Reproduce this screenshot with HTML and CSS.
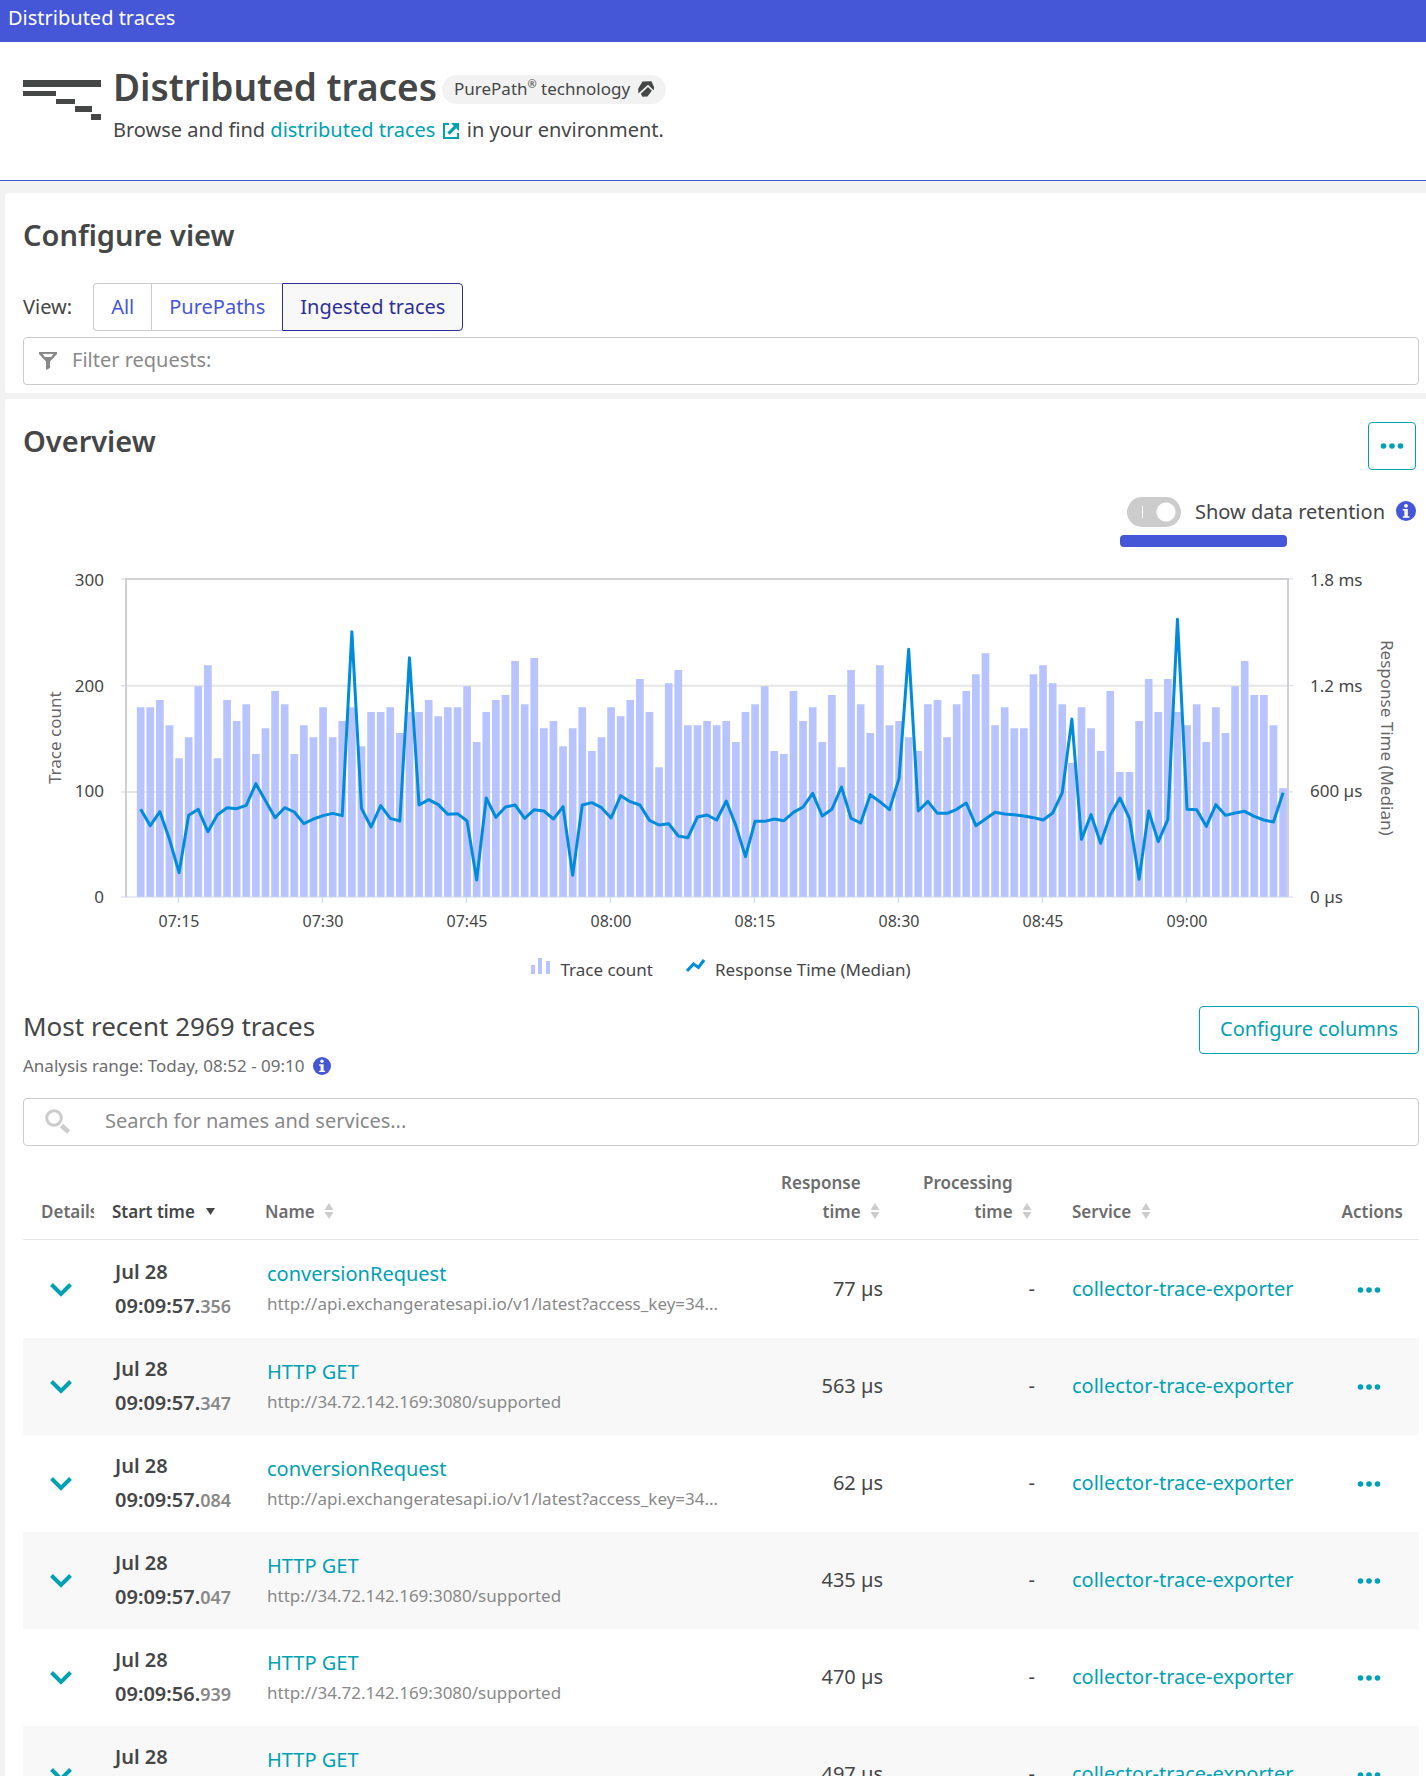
FILE: index.html
```html
<!DOCTYPE html>
<html lang="en">
<head>
<meta charset="utf-8">
<meta name="viewport" content="width=device-width, initial-scale=1">
<title>Distributed traces</title>
<link rel="stylesheet" href="styles.css">
</head>
<body>
<svg class="sprite" aria-hidden="true">
  <symbol id="chevron" viewBox="0 0 24 16"><path d="M2.500 2.500 L12 12 L21.500 2.500" fill="none" stroke="currentColor" stroke-width="4"/></symbol>
  <symbol id="dots" viewBox="0 0 24 8"><circle cx="3.500" cy="4" r="2.800"/><circle cx="12" cy="4" r="2.800"/><circle cx="20.500" cy="4" r="2.800"/></symbol>
  <symbol id="sort" viewBox="0 0 10 16"><path d="M5 0 L9.500 7 H0.500 Z M5 16 L9.500 9 H0.500 Z"/></symbol>
  <symbol id="info" viewBox="0 0 20 20"><circle cx="10" cy="10" r="10" fill="#4556d7"/><circle cx="10" cy="4.800" r="1.900" fill="#fff"/><path d="M6.800 8 H11.800 V15.200 H13.400 V16.800 H6.800 V15.200 H8.400 V9.600 H6.800 Z" fill="#fff"/></symbol>
</svg>

<nav class="topbar" aria-label="Breadcrumb">Distributed traces</nav>

<header class="page-header">
  <svg class="page-icon" viewBox="0 0 78 40" aria-hidden="true"><path fill="#454646" d="M0 0H78V7H0Z M0 11H33V16H0Z M33 19H52V24H33Z M52 26H69V32H52Z M68 34H78V40H68Z"/></svg>
  <div>
    <div class="title-row">
      <h1>Distributed traces</h1>
      <span class="pill"><span>PurePath<sup>®</sup> technology</span>
        <svg width="16" height="16" viewBox="0 0 16 16" aria-hidden="true"><path fill="#454646" d="M4.500 0.500 L13.500 0.300 L16 6 L15.800 9.500 L10 3.800 L0.300 12.500 L0.300 7.500 Z M10 6 L13.800 9.700 L9.500 15.500 L4.500 15.800 L2.800 12.800 Z"/></svg>
      </span>
    </div>
    <p class="subtitle">Browse and find <a href="#">distributed traces <svg width="16" height="16" viewBox="0 0 16 16" aria-hidden="true"><path fill="#00a1b2" d="M0 0H6V2H2V14H14V10H16V16H0Z M8 0H16V8L13.200 5.200L6.500 11.800L4.300 9.600L10.900 2.900Z"/></svg></a> in your environment.</p>
  </div>
</header>

<main>
  <section class="card configure">
    <h2>Configure view</h2>
    <div class="view-row">
      <span>View:</span>
      <div class="segmented" role="group" aria-label="View">
        <button type="button">All</button><button type="button">PurePaths</button><button type="button" class="active" aria-pressed="true">Ingested traces</button>
      </div>
    </div>
    <div class="field filter">
      <svg width="18" height="18" viewBox="0 0 18 18" aria-hidden="true"><path fill="#898989" fill-rule="evenodd" d="M0 0H18V2L11 9.500V16L7 18V9.500L0 2Z M3.500 2L6 5H12L14.500 2Z"/></svg>
      <input type="text" placeholder="Filter requests:" aria-label="Filter requests">
    </div>
  </section>

  <section class="card overview">
    <div class="overview-head">
      <h2>Overview</h2>
      <button type="button" class="icon-button" aria-label="More"><svg width="24" height="8"><use href="#dots"/></svg></button>
    </div>

    <div class="retention">
      <input type="checkbox" class="toggle" id="retention" role="switch">
      <label for="retention">Show data retention</label>
      <svg class="info" width="20" height="20"><use href="#info"/></svg>
    </div>
    <div class="retention-bar"></div>

    <div class="chart">
      <div class="axis-title left">Trace count</div>
      <div class="axis left"><span>300</span><span>200</span><span>100</span><span>0</span></div>
      <svg class="plot" viewBox="0 57 3486 954" preserveAspectRatio="none" role="img" aria-label="Trace count and median response time">
        <path class="grid" d="M0 377H3486M0 696H3486"/>
        <path class="bars" id="bars"/>
        <path class="frame" d="M0 1011V57H3486V1011"/>
        <path class="ticks" d="M-15 57H0M-15 377H0M-15 696H0M3486 57H3501M3486 377H3501M3486 696H3501M-15 1011H3501M157 1011V1028M589 1011V1028M1021 1011V1028M1453 1011V1028M1885 1011V1028M2317 1011V1028M2749 1011V1028M3181 1011V1028"/>
        <path class="line" id="line"/>
      </svg>
      <div class="axis right"><span>1.8 ms</span><span>1.2 ms</span><span>600 µs</span><span>0 µs</span></div>
      <div class="axis-title right">Response Time (Median)</div>
      <div class="time-axis"><span>07:15</span><span>07:30</span><span>07:45</span><span>08:00</span><span>08:15</span><span>08:30</span><span>08:45</span><span>09:00</span></div>
    </div>

    <div class="legend">
      <span><svg width="19" height="16" viewBox="0 0 19 16" aria-hidden="true"><path fill="#b8c4ff" d="M0 7H4V16H0Z M7 0H11V16H7Z M15 3H19V16H15Z"/></svg>Trace count</span>
      <span><svg width="19" height="16" viewBox="0 0 19 16" aria-hidden="true"><path fill="none" stroke="#008cdb" stroke-width="3" d="M1 13L7.500 6L12.500 9.500L18 2"/></svg>Response Time (Median)</span>
    </div>

    <div class="traces-head">
      <div>
        <h3>Most recent 2969 traces</h3>
        <p class="range">Analysis range: Today, 08:52 - 09:10 <svg class="info" width="18" height="18"><use href="#info"/></svg></p>
      </div>
      <button type="button" class="outline-button">Configure columns</button>
    </div>

    <div class="field search">
      <svg width="26" height="26" viewBox="0 0 26 26" aria-hidden="true"><g fill="none" stroke="#ccc"><circle cx="9" cy="9" r="7.300" stroke-width="3"/><path d="M16.500 16.500L23.500 23" stroke-width="4.500"/></g></svg>
      <input type="search" placeholder="Search for names and services..." aria-label="Search for names and services">
    </div>

    <table class="traces">
      <colgroup><col class="c-details"><col class="c-start"><col><col class="c-response"><col class="c-processing"><col class="c-service"><col class="c-actions"></colgroup>
      <thead>
        <tr>
          <th><div class="clip">Details</div></th>
          <th class="sorted">Start time <svg class="caret" width="9" height="7" viewBox="0 0 9 7"><path d="M0 0H9L4.500 7Z"/></svg></th>
          <th>Name <svg class="sort" width="10" height="16"><use href="#sort"/></svg></th>
          <th class="num"><span class="wrap-head">Response time</span> <svg class="sort" width="10" height="16"><use href="#sort"/></svg></th>
          <th class="num"><span class="wrap-head">Processing time</span> <svg class="sort" width="10" height="16"><use href="#sort"/></svg></th>
          <th class="service">Service <svg class="sort" width="10" height="16"><use href="#sort"/></svg></th>
          <th class="actions">Actions</th>
        </tr>
      </thead>
      <tbody>
        <tr>
          <td><button type="button" class="bare" aria-label="Details"><svg width="24" height="16"><use href="#chevron"/></svg></button></td>
          <td class="start">Jul 28<br>09:09:57.<small>356</small></td>
          <td class="name"><a href="#">conversionRequest</a><div>http://api.exchangeratesapi.io/v1/latest?access_key=34...</div></td>
          <td class="num">77 µs</td><td class="num">-</td>
          <td class="service"><a href="#">collector-trace-exporter</a></td>
          <td class="actions"><button type="button" class="bare" aria-label="Actions"><svg width="24" height="8"><use href="#dots"/></svg></button></td>
        </tr>
        <tr>
          <td><button type="button" class="bare" aria-label="Details"><svg width="24" height="16"><use href="#chevron"/></svg></button></td>
          <td class="start">Jul 28<br>09:09:57.<small>347</small></td>
          <td class="name"><a href="#">HTTP GET</a><div>http://34.72.142.169:3080/supported</div></td>
          <td class="num">563 µs</td><td class="num">-</td>
          <td class="service"><a href="#">collector-trace-exporter</a></td>
          <td class="actions"><button type="button" class="bare" aria-label="Actions"><svg width="24" height="8"><use href="#dots"/></svg></button></td>
        </tr>
        <tr>
          <td><button type="button" class="bare" aria-label="Details"><svg width="24" height="16"><use href="#chevron"/></svg></button></td>
          <td class="start">Jul 28<br>09:09:57.<small>084</small></td>
          <td class="name"><a href="#">conversionRequest</a><div>http://api.exchangeratesapi.io/v1/latest?access_key=34...</div></td>
          <td class="num">62 µs</td><td class="num">-</td>
          <td class="service"><a href="#">collector-trace-exporter</a></td>
          <td class="actions"><button type="button" class="bare" aria-label="Actions"><svg width="24" height="8"><use href="#dots"/></svg></button></td>
        </tr>
        <tr>
          <td><button type="button" class="bare" aria-label="Details"><svg width="24" height="16"><use href="#chevron"/></svg></button></td>
          <td class="start">Jul 28<br>09:09:57.<small>047</small></td>
          <td class="name"><a href="#">HTTP GET</a><div>http://34.72.142.169:3080/supported</div></td>
          <td class="num">435 µs</td><td class="num">-</td>
          <td class="service"><a href="#">collector-trace-exporter</a></td>
          <td class="actions"><button type="button" class="bare" aria-label="Actions"><svg width="24" height="8"><use href="#dots"/></svg></button></td>
        </tr>
        <tr>
          <td><button type="button" class="bare" aria-label="Details"><svg width="24" height="16"><use href="#chevron"/></svg></button></td>
          <td class="start">Jul 28<br>09:09:56.<small>939</small></td>
          <td class="name"><a href="#">HTTP GET</a><div>http://34.72.142.169:3080/supported</div></td>
          <td class="num">470 µs</td><td class="num">-</td>
          <td class="service"><a href="#">collector-trace-exporter</a></td>
          <td class="actions"><button type="button" class="bare" aria-label="Actions"><svg width="24" height="8"><use href="#dots"/></svg></button></td>
        </tr>
        <tr>
          <td><button type="button" class="bare" aria-label="Details"><svg width="24" height="16"><use href="#chevron"/></svg></button></td>
          <td class="start">Jul 28<br>&nbsp;</td>
          <td class="name"><a href="#">HTTP GET</a><div>&nbsp;</div></td>
          <td class="num">497 µs</td><td class="num">-</td>
          <td class="service"><a href="#">collector-trace-exporter</a></td>
          <td class="actions"><button type="button" class="bare" aria-label="Actions"><svg width="24" height="8"><use href="#dots"/></svg></button></td>
        </tr>
      </tbody>
    </table>
  </section>
</main>
<script src="chart.js"></script>
</body>
</html>
```
FILE: styles.css
```css
* { box-sizing: border-box; }
body {
  display: flex;
  flex-direction: column;
  height: 100vh;
  margin: 0;
  background: #f2f2f2;
  color: #454646;
  font-family: "Noto Sans", "Open Sans", sans-serif;
  font-size: 20px;
  line-height: 28px;
}
h1, h2, h3, p { margin: 0; }
a { color: #00a1b2; text-decoration: none; }
button, input { font: inherit; color: inherit; }
button { cursor: pointer; }
.sprite { display: none; }

.topbar {
  flex: none;
  height: 42px;
  padding: 4px 8px;
  background: #4556d7;
  color: #fff;
}

.page-header {
  display: flex;
  flex: none;
  gap: 12px;
  height: 139px;
  padding: 20px 23px;
  background: #fff;
  border-bottom: 1px solid #4556d7;
}
.page-icon { width: 78px; height: 40px; margin-top: 18px; flex: none; }
.title-row { display: flex; align-items: center; gap: 5px; }
h1 { font-size: 37px; line-height: 50px; font-weight: 600; }
.pill {
  display: flex;
  align-items: center;
  gap: 8px;
  height: 29px;
  margin-top: 4px;
  padding: 0 12px;
  border-radius: 15px;
  background: #f2f2f2;
  font-size: 17px;
  white-space: nowrap;
}
.pill sup { font-size: 11px; line-height: 0; }
.subtitle { margin-top: 4px; }
.subtitle svg { margin: 0 3px 0 2px; vertical-align: -2px; }

main {
  display: flex;
  flex: 1;
  flex-direction: column;
  gap: 6px;
  min-height: 0;
  padding: 12px 0 0 5px;
  overflow-y: auto;
  scrollbar-width: none;
}
.card { flex: none; background: #fff; border-radius: 4px 0 0 4px; padding: 23px 7px 8px 18px; }
h2 { font-size: 29px; line-height: 38px; font-weight: 600; }
.view-row { display: flex; align-items: center; gap: 21px; margin-top: 29px; }
.segmented { display: flex; }
.segmented button {
  height: 48px;
  padding: 0 17px;
  border: 1px solid #ccc;
  border-right: 0;
  background: #fff;
  color: #4556d7;
}
.segmented button:first-child { border-radius: 4px 0 0 4px; }
.segmented .active {
  border: 1px solid #2f2f97;
  border-radius: 0 4px 4px 0;
  background: #f8f8f8;
  color: #2f2f97;
}
.field {
  display: flex;
  align-items: center;
  height: 48px;
  border: 1px solid #ccc;
  border-radius: 4px;
}
.field input {
  flex: 1;
  min-width: 0;
  height: 44px;
  padding: 0 0 3px;
  border: 0;
  background: none;
  outline: 0;
}
.field input::placeholder { color: #898989; opacity: 1; }
.filter { margin-top: 6px; padding: 0 15px; gap: 15px; }
.search { margin-top: 16px; padding: 0 21px; gap: 34px; }

.overview { padding-bottom: 0; }
.overview-head { display: flex; justify-content: space-between; padding-right: 3px; }
.icon-button, .outline-button {
  height: 48px;
  border: 1px solid #00a1b2;
  border-radius: 4px;
  background: #fff;
  color: #00a1b2;
}
.icon-button { width: 48px; padding: 0; }
.icon-button svg, .bare svg { display: block; margin: auto; fill: currentColor; }
.outline-button { padding: 0 20px 2px; }

.retention { display: flex; justify-content: flex-end; align-items: center; margin-top: 27px; padding-right: 3px; height: 30px; }
.toggle {
  appearance: none;
  width: 54px;
  height: 30px;
  margin: 0 14px 0 0;
  border-radius: 15px;
  background:
    radial-gradient(circle at 39px 15px, #fff 9px, transparent 10px),
    linear-gradient(#fff, #fff) 15px 9px / 1px 12px no-repeat,
    #ccc;
}
.retention .info { margin: 0 0 2px 11px; }
.retention-bar { width: 167px; height: 12px; margin: 8px 132px 0 auto; border-radius: 4px; background: #4556d7; }

.chart {
  display: grid;
  grid-template-columns: 18px 40px minmax(0, 1fr) 64px 22px;
  grid-template-rows: 318px auto;
  margin: 32px 23px 0;
  font-size: 17px;
  line-height: 24px;
}
.axis { display: flex; flex-direction: column; justify-content: space-between; margin: -11px 0 -12px; white-space: nowrap; }
.axis.left { text-align: right; }
.plot { width: calc(100% - 44px); height: 318px; margin: 0 22px; overflow: visible; }
.plot path { fill: none; vector-effect: non-scaling-stroke; }
.plot .bars { fill: #b8c4ff; }
.plot .grid { stroke: #e6e6e6; stroke-width: 2; }
.plot .frame { stroke: #d0d0d0; stroke-width: 2; }
.plot .ticks { stroke: #ccd6eb; stroke-width: 1; }
.plot .line { stroke: #008cdb; stroke-width: 3; stroke-linejoin: round; }
.axis-title { writing-mode: vertical-rl; text-align: center; line-height: 18px; color: #666; white-space: nowrap; }
.axis-title.left { transform: rotate(180deg); }
.time-axis {
  grid-column: 3;
  display: grid;
  grid-template-columns: repeat(8, 144fr) 29fr;
  margin: 12px 22px 0 3px;
  font-size: 16px;
  text-align: center;
}
.legend { display: flex; justify-content: center; gap: 33px; margin-top: 25px; font-size: 17px; line-height: 24px; }
.legend span { display: flex; gap: 10px; }

.traces-head { display: flex; justify-content: space-between; align-items: flex-start; margin-top: 24px; }
h3 { font-size: 26px; line-height: 40px; font-weight: 400; }
.range { display: flex; align-items: center; gap: 8px; margin-top: 5px; padding-bottom: 1px; font-size: 17px; line-height: 30px; color: #6d6d6d; }

.traces { width: 100%; margin-top: 11px; border-collapse: separate; border-spacing: 0; table-layout: fixed; }
.c-details { width: 80px; }
.c-start { width: 153px; }
.c-response { width: 137px; }
.c-processing { width: 152px; }
.c-service { width: 286px; }
.c-actions { width: 89px; }
.traces th {
  padding: 11px 9px 13px;
  border-bottom: 1px solid #e6e6e6;
  font-size: 17px;
  line-height: 29px;
  font-weight: 600;
  text-align: left;
  vertical-align: bottom;
  color: #6d6d6d;
  white-space: nowrap;
}
.traces th:first-child { padding: 11px 0 13px 18px; }
.clip { width: 53px; overflow: hidden; }
.traces .sorted { color: #454646; }
.caret { margin-left: 7px; vertical-align: 3px; fill: #454646; }
.sort { margin-left: 5px; vertical-align: -1px; fill: #ccc; }
.traces th.num { padding-right: 12px; }
.wrap-head { display: inline-block; width: 90px; white-space: normal; vertical-align: bottom; }
.traces td { height: 97px; padding: 0 9px 1px; }
.traces tbody tr:nth-child(even) { background: #f8f8f8; }
.traces tbody tr:first-child td { height: 98px; }
.traces td:first-child { padding: 1px 5px 0 0; }
.traces .start { padding-left: 12px; font-weight: 600; line-height: 34px; white-space: nowrap; }
.start small { font-size: 18px; color: #898989; }
.traces .name { padding: 2px 9px 0 11px; white-space: nowrap; }
.name div { font-size: 17px; line-height: 32px; color: #898989; overflow: hidden; text-overflow: ellipsis; }
.traces .num { text-align: right; }
.traces .service { padding-left: 28px; white-space: nowrap; }
.traces th.actions { padding-right: 16px; text-align: right; }
.traces td.actions { padding: 1px 11px 0 0; }
.bare { display: block; width: 100%; padding: 8px 0; border: 0; background: none; color: #00a1b2; }
```
FILE: chart.js
```js
// One entry per minute, 07:11 to 09:10, as heights in the plot's own units.
var barTops = [442,442,420,496,595,532,379,316,595,420,483,433,582,505,393,433,582,496,532,442,
  532,483,442,559,456,456,442,519,456,456,420,469,442,442,379,546,456,420,405,303,
  433,294,505,483,559,505,442,573,532,442,469,420,357,456,622,370,330,496,496,483,
  496,483,546,456,433,379,573,582,393,483,442,546,405,622,330,433,519,316,496,483,
  532,573,433,420,532,433,393,343,280,496,442,505,505,343,316,370,433,609,442,505,
  573,393,636,636,483,357,456,357,456,496,433,546,442,519,379,303,405,405,496,685];
var medians = [748,797,755,838,938,766,748,815,764,743,746,736,671,722,773,743,756,791,777,767,
  760,767,215,745,801,737,775,783,293,735,719,734,763,761,783,960,714,772,741,735,
  775,749,753,777,740,946,735,728,743,774,707,725,735,781,795,791,828,833,771,765,
  780,723,797,890,784,784,777,782,757,741,700,768,748,681,775,789,704,725,749,655,
  268,753,724,760,760,748,729,797,777,757,762,764,768,773,780,759,698,477,838,764,
  850,765,714,775,958,753,845,778,178,748,749,799,734,766,759,754,769,780,786,698];

var base = 1011;
function x(i) { return 44 + 28.8 * i; }

document.getElementById('bars').setAttribute('d', barTops.map(function (top, i) {
  return 'M' + (x(i) - 11.5) + ' ' + base + 'V' + top + 'h23V' + base + 'Z';
}).join(''));

document.getElementById('line').setAttribute('d', medians.map(function (y, i) {
  return (i ? 'L' : 'M') + x(i) + ' ' + y;
}).join(''));
```
